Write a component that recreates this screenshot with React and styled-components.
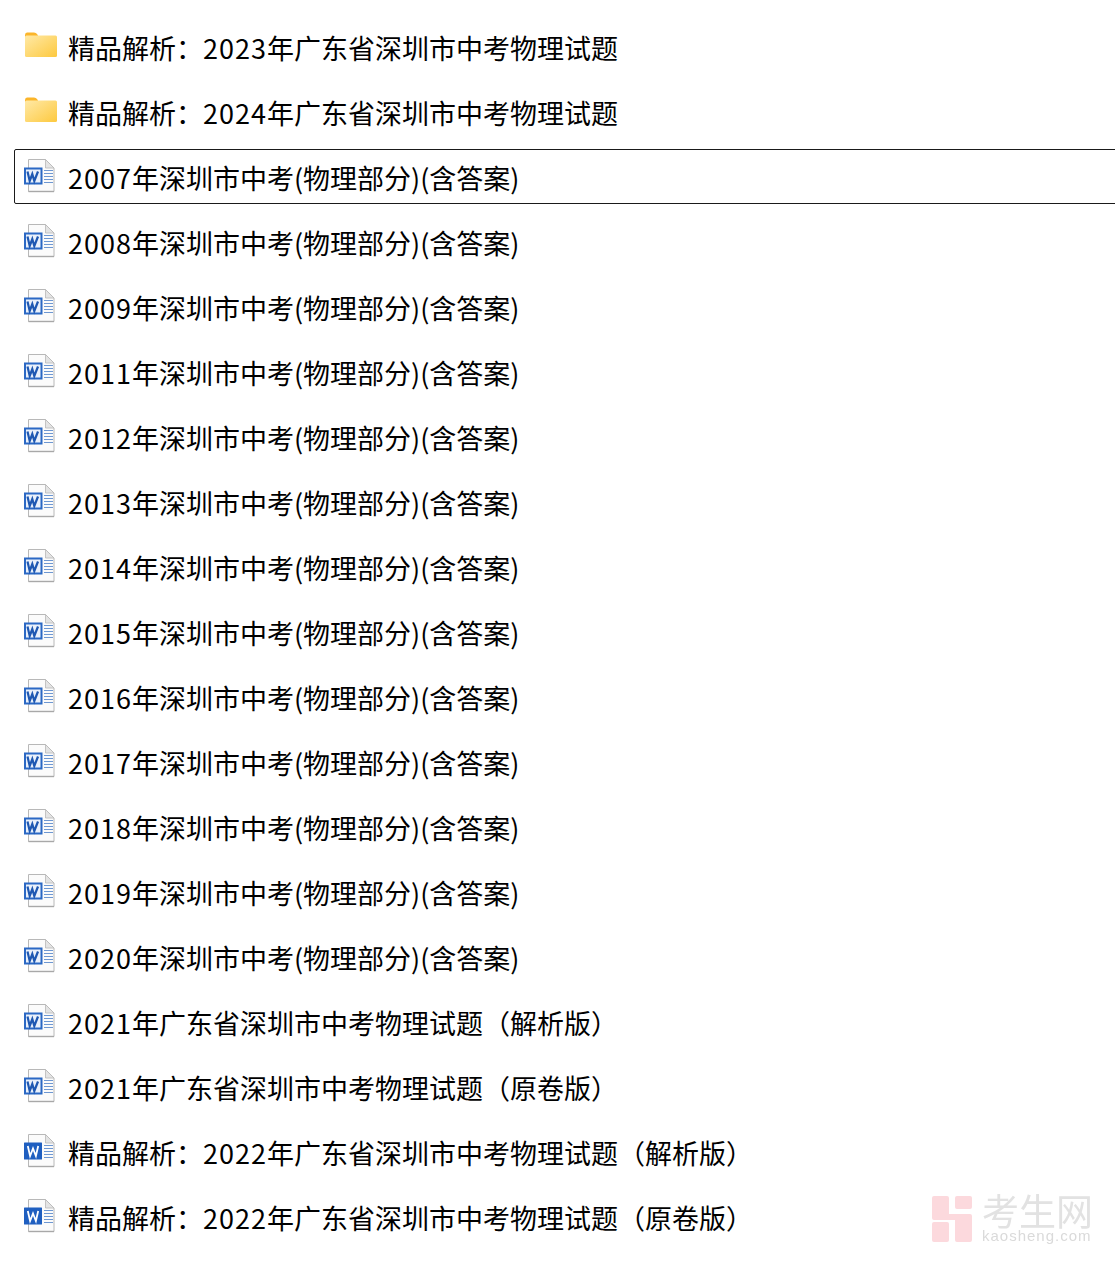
import React from "react";
import styled, { createGlobalStyle } from "styled-components";

const Global = createGlobalStyle`
  html, body { margin: 0; padding: 0; background: #fff; overflow: hidden; }
  body { width: 1115px; height: 1261px; position: relative; }
`;

const List = styled.ul`
  list-style: none;
  margin: 0;
  padding: 19px 0 0 14px;
  display: flex;
  flex-direction: column;
  gap: 10px;
  width: 1115px;
  box-sizing: border-box;
`;

const Row = styled.li`
  height: 55px;
  width: 1110px;
  box-sizing: border-box;
  flex: none;
  display: flex;
  align-items: center;
  gap: 10px;
  padding-left: 9px;
  border: 1px solid ${(p) => (p.$selected ? "#1a1a1a" : "transparent")};
  border-radius: 2px;
`;

const IconSlot = styled.span`
  width: 34px;
  height: 36px;
  flex: none;
  display: block;
  svg { display: block; }
`;

const Name = styled.span`
  font-family: "Noto Sans CJK SC", "Noto Sans", sans-serif;
  font-size: 27px;
  line-height: 36px;
  color: #000;
  white-space: nowrap;
  position: relative;
  top: 1px;
`;

const Digits = styled.span`
  letter-spacing: 1px;
`;

const Watermark = styled.div`
  position: absolute;
  left: 932px;
  top: 1196px;
  display: flex;
  gap: 10px;
  filter: blur(0.6px);
`;

const WatermarkText = styled.div`
  display: flex;
  flex-direction: column;
  margin-top: -3px;
`;

const WatermarkTitle = styled.span`
  font-family: "Noto Sans CJK SC", sans-serif;
  font-size: 37px;
  line-height: 35px;
  color: #e2e2e2;
`;

const WatermarkUrl = styled.span`
  font-family: "Liberation Sans", sans-serif;
  font-size: 15px;
  line-height: 15px;
  color: #dadada;
  letter-spacing: 1px;
`;

const Folder = () => (
  <svg width="34" height="36" viewBox="0 0 34 36">
    <defs>
      <linearGradient id="fg" x1="0" y1="0" x2="1" y2="1">
        <stop offset="0" stopColor="#ffe9a6" />
        <stop offset="1" stopColor="#fdc93f" />
      </linearGradient>
    </defs>
    <path d="M1 6Q1 3.5 3 3.5h7q2 0 3 1.5l1 1.5v3H1z" fill="#fbb52a" />
    <rect x="1" y="6.5" width="32" height="21.5" rx="1.5" fill="url(#fg)" />
  </svg>
);

const Page = () => (
  <>
    <path d="M4.5 0.5H21.5L30 9V32.5H4.5Z" fill="#fbfbfb" stroke="#b8b8b8" />
    <path d="M21.5 0.5V9H30Z" fill="#e4e4e4" stroke="#b8b8b8" strokeWidth="0.8" />
    <path d="M4.5 32.5H30" stroke="#a8a8a8" strokeWidth="1.4" />
    <path d="M20 11.5h9M20 14.5h9M20 17.5h9M20 20.5h9M20 23.5h9" stroke="#6d97d2" strokeWidth="1" />
  </>
);

const WordOld = () => (
  <svg width="34" height="36" viewBox="0 0 34 36">
    <Page />
    <rect x="1" y="9.5" width="16.5" height="15" fill="#eaf1fb" stroke="#2b68c4" strokeWidth="2" />
    <path d="M3.5 12.5l2.2 9.5 2.6-7 2 7 3.7-9.5" fill="none" stroke="#1e58b2" strokeWidth="2.2" />
  </svg>
);

const WordNew = () => (
  <svg width="34" height="36" viewBox="0 0 34 36">
    <Page />
    <rect x="0" y="8.5" width="18" height="17" rx="0.5" fill="#1f5fc0" />
    <path d="M3.8 12l2.3 10 2.9-7.5 2.9 7.5 2.3-10" fill="none" stroke="#fff" strokeWidth="1.8" />
  </svg>
);

const Logo = () => (
  <svg width="40" height="46" viewBox="0 0 40 46">
    <path d="M2 0h13q2 0 2 2v16h21q2 0 2 2v24q0 2-2 2H25q-2 0-2-2V24H2q-2 0-2-2V2q0-2 2-2z" fill="#fcd9dd" />
    <rect x="23" y="0" width="17" height="13" rx="2" fill="#fcd9dd" />
    <rect x="0" y="26" width="17" height="20" rx="2" fill="#fcd9dd" />
  </svg>
);

const phys = "年深圳市中考(物理部分)(含答案)";
const prefix = "精品解析\uFF1A";
const province = "年广东省深圳市中考物理试题";
const jiexi = province + "\uFF08解析版\uFF09";
const yuanjuan = province + "\uFF08原卷版\uFF09";
const items = [
  { kind: "folder", pre: prefix, y: "2023", rest: province },
  { kind: "folder", pre: prefix, y: "2024", rest: province },
  { kind: "old", y: "2007", rest: phys, selected: true },
  ...["2008","2009","2011","2012","2013","2014","2015","2016","2017","2018","2019","2020"].map((y) => ({ kind: "old", y, rest: phys })),
  { kind: "old", y: "2021", rest: jiexi },
  { kind: "old", y: "2021", rest: yuanjuan },
  { kind: "new", pre: prefix, y: "2022", rest: jiexi },
  { kind: "new", pre: prefix, y: "2022", rest: yuanjuan },
];

const icons = { folder: Folder, old: WordOld, new: WordNew };

export default function App() {
  return (
    <>
      <Global />
      <List>
        {items.map((it, i) => {
          const Icon = icons[it.kind];
          return (
            <Row key={i} $selected={it.selected}>
              <IconSlot><Icon /></IconSlot>
              <Name>{it.pre}<Digits>{it.y}</Digits>{it.rest}</Name>
            </Row>
          );
        })}
      </List>
      <Watermark>
        <Logo />
        <WatermarkText>
          <WatermarkTitle>考生网</WatermarkTitle>
          <WatermarkUrl>kaosheng.com</WatermarkUrl>
        </WatermarkText>
      </Watermark>
    </>
  );
}
